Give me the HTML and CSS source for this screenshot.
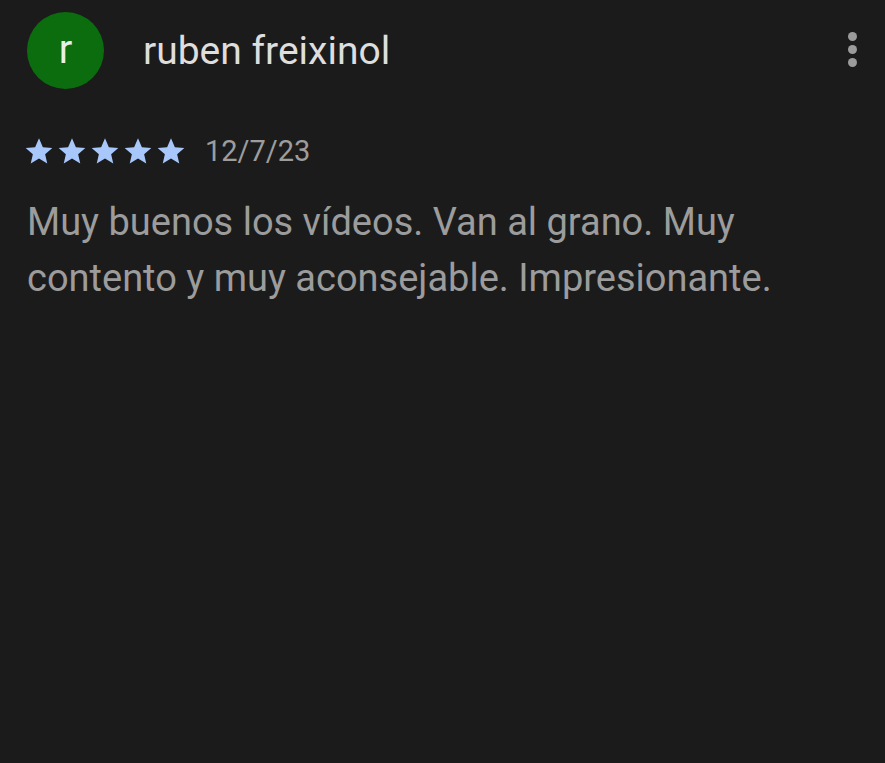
FILE: index.html
```html
<!DOCTYPE html>
<html lang="es">
<head>
<meta charset="utf-8">
<link rel="stylesheet" href="styles.css">
</head>
<body>
<div class="review">
  <div class="header">
    <div class="avatar">r</div>
    <div class="name">ruben freixinol</div>
    <div class="menu"><span></span><span></span><span></span></div>
  </div>
  <div class="meta">
    <div class="stars">
      <svg viewBox="0 0 24 24"><path d="M12 2.5l2.9 6.6 7.1.6-5.4 4.7 1.6 7-6.2-3.7-6.2 3.7 1.6-7L2 9.7l7.1-.6z"/></svg>
      <svg viewBox="0 0 24 24"><path d="M12 2.5l2.9 6.6 7.1.6-5.4 4.7 1.6 7-6.2-3.7-6.2 3.7 1.6-7L2 9.7l7.1-.6z"/></svg>
      <svg viewBox="0 0 24 24"><path d="M12 2.5l2.9 6.6 7.1.6-5.4 4.7 1.6 7-6.2-3.7-6.2 3.7 1.6-7L2 9.7l7.1-.6z"/></svg>
      <svg viewBox="0 0 24 24"><path d="M12 2.5l2.9 6.6 7.1.6-5.4 4.7 1.6 7-6.2-3.7-6.2 3.7 1.6-7L2 9.7l7.1-.6z"/></svg>
      <svg viewBox="0 0 24 24"><path d="M12 2.5l2.9 6.6 7.1.6-5.4 4.7 1.6 7-6.2-3.7-6.2 3.7 1.6-7L2 9.7l7.1-.6z"/></svg>
    </div>
    <div class="date">12/7/23</div>
  </div>
  <p class="text">Muy buenos los vídeos. Van al grano. Muy contento y muy aconsejable. Impresionante.</p>
</div>
</body>
</html>
```
FILE: styles.css
```css
html, body {
  margin: 0;
  padding: 0;
  background: #1b1b1b;
  height: 100%;
}
body {
  font-family: Roboto, "Liberation Sans", sans-serif;
}
.review {
  padding: 12px 0 0 27px;
}
.header {
  display: flex;
  align-items: center;
  height: 77px;
}
.avatar {
  width: 77px;
  height: 77px;
  border-radius: 50%;
  background: #0b6d0d;
  color: #e8f0e8;
  font-size: 40px;
  display: flex;
  align-items: center;
  justify-content: center;
  flex: none;
  padding-bottom: 3px;
  box-sizing: border-box;
}
.name {
  margin-left: 39px;
  font-size: 39px;
  color: #dedede;
  flex: 1;
  padding-top: 1px;
}
.menu {
  display: flex;
  flex-direction: column;
  gap: 4px;
  margin-right: 28px;
  padding-bottom: 2px;
}
.menu span {
  width: 9px;
  height: 9px;
  border-radius: 50%;
  background: #9b9b9b;
}
.meta {
  display: flex;
  align-items: center;
  margin-top: 45px;
  height: 34px;
}
.stars {
  display: flex;
  gap: 1px;
  margin-left: -4px;
}
.stars svg {
  width: 32px;
  height: 32px;
  fill: #a8c7fa;
}
.date {
  margin-left: 18px;
  font-size: 29px;
  color: #9d9d9d;
}
.text {
  margin: 26px 0 0 0;
  width: 830px;
  font-size: 38px;
  line-height: 56px;
  color: #9c9c9c;
}
```
